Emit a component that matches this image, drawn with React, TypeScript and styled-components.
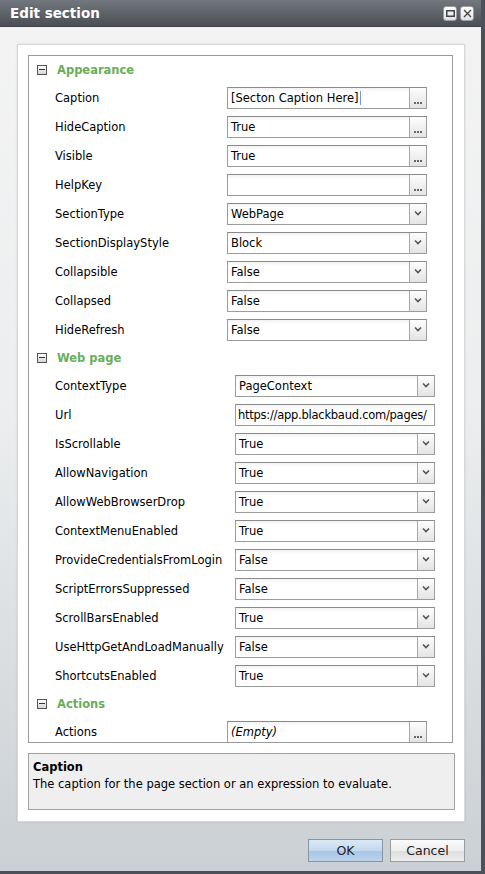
import React from 'react';
import styled, { createGlobalStyle } from 'styled-components';

type Kind = 'text' | 'ellipsis' | 'select';

interface Prop {
  name: string;
  value: string;
  kind: Kind;
  italic?: boolean;
  caret?: boolean;
}

interface Section {
  title: string;
  labelWidth: number;
  props: Prop[];
}

const sections: Section[] = [
  {
    title: 'Appearance',
    labelWidth: 172,
    props: [
      { name: 'Caption', value: '[Secton Caption Here]', kind: 'ellipsis', caret: true },
      { name: 'HideCaption', value: 'True', kind: 'ellipsis' },
      { name: 'Visible', value: 'True', kind: 'ellipsis' },
      { name: 'HelpKey', value: '', kind: 'ellipsis' },
      { name: 'SectionType', value: 'WebPage', kind: 'select' },
      { name: 'SectionDisplayStyle', value: 'Block', kind: 'select' },
      { name: 'Collapsible', value: 'False', kind: 'select' },
      { name: 'Collapsed', value: 'False', kind: 'select' },
      { name: 'HideRefresh', value: 'False', kind: 'select' },
    ],
  },
  {
    title: 'Web page',
    labelWidth: 180,
    props: [
      { name: 'ContextType', value: 'PageContext', kind: 'select' },
      { name: 'Url', value: 'https://app.blackbaud.com/pages/', kind: 'text' },
      { name: 'IsScrollable', value: 'True', kind: 'select' },
      { name: 'AllowNavigation', value: 'True', kind: 'select' },
      { name: 'AllowWebBrowserDrop', value: 'True', kind: 'select' },
      { name: 'ContextMenuEnabled', value: 'True', kind: 'select' },
      { name: 'ProvideCredentialsFromLogin', value: 'False', kind: 'select' },
      { name: 'ScriptErrorsSuppressed', value: 'False', kind: 'select' },
      { name: 'ScrollBarsEnabled', value: 'True', kind: 'select' },
      { name: 'UseHttpGetAndLoadManually', value: 'False', kind: 'select' },
      { name: 'ShortcutsEnabled', value: 'True', kind: 'select' },
    ],
  },
  {
    title: 'Actions',
    labelWidth: 172,
    props: [{ name: 'Actions', value: '(Empty)', kind: 'ellipsis', italic: true }],
  },
];

const GlobalStyle = createGlobalStyle`
  html, body {
    margin: 0;
    padding: 0;
    background: #ffffff;
  }
  body {
    font-family: "DejaVu Sans", "Open Sans", sans-serif;
    font-size: 11.5px;
    color: #000;
  }
`;

const Window = styled.div`
  width: 485px;
  height: 874px;
  box-sizing: border-box;
  display: flex;
  flex-direction: column;
  border-right: 4px solid #4d5157;
  border-bottom: 3px solid #4d5157;
`;

const TitleBar = styled.div`
  height: 27px;
  flex: none;
  display: flex;
  align-items: center;
  justify-content: space-between;
  padding: 0 7px 0 10px;
  background: linear-gradient(#73777e, #4a4e55);
  border-bottom: 1px solid #3f4248;
  box-sizing: border-box;
`;

const Title = styled.div`
  color: #fff;
  font-weight: bold;
  font-size: 13.5px;
`;

const TitleButtons = styled.div`
  display: flex;
  gap: 3px;
`;

const TitleButton = styled.div`
  width: 14px;
  height: 15px;
  border-radius: 3px;
  background: linear-gradient(#ffffff, #dfe1e4);
  border: 1px solid #9a9ea4;
  box-sizing: border-box;
  display: flex;
  align-items: center;
  justify-content: center;
`;

const Body = styled.div`
  flex: 1;
  display: flex;
  flex-direction: column;
  padding: 17px 16px 0 17px;
  background: linear-gradient(#f3f3f3 0%, #eceeef 45%, #cbd0d4 100%);
`;

const Panel = styled.div`
  background: #fff;
  border: 1px solid #d8d8d8;
  box-shadow: 0 0 2px rgba(0, 0, 0, 0.12);
  padding: 10px 9px 11px 10px;
  display: flex;
  flex-direction: column;
`;

const Grid = styled.div`
  height: 688px;
  overflow: hidden;
  border: 1px solid #9a9a9a;
  box-sizing: border-box;
  margin-right: 2px;
  display: flex;
  flex-direction: column;
`;

const Header = styled.div`
  height: 27px;
  flex: none;
  display: flex;
  align-items: center;
  padding: 1px 0 1px 8px;
  box-sizing: border-box;
  gap: 10px;
`;

const Expander = styled.div`
  width: 8px;
  height: 8px;
  border: 1px solid #555;
  background: linear-gradient(#ffffff, #d6d6d6);
  position: relative;
  &::after {
    content: '';
    position: absolute;
    left: 1px;
    right: 1px;
    top: 3px;
    height: 1px;
    background: #333;
  }
`;

const HeaderText = styled.div`
  color: #6aad5a;
  font-weight: bold;
  font-size: 11.5px;
`;

const Row = styled.div<{ $labelWidth: number }>`
  height: 29px;
  flex: none;
  display: grid;
  grid-template-columns: ${p => p.$labelWidth}px 200px;
  align-items: center;
  padding-left: 26px;
`;

const Label = styled.div`
  white-space: nowrap;
`;

const Field = styled.div`
  height: 22px;
  box-sizing: border-box;
  border: 1px solid #9c9c9c;
  border-top-color: #8a8a8a;
  background: linear-gradient(#f2f2f2 0px, #ffffff 4px);
  display: flex;
  align-items: stretch;
`;

const Value = styled.div<{ $italic?: boolean; $tight?: boolean }>`
  flex: 1;
  display: flex;
  align-items: center;
  padding-left: ${p => (p.$tight ? 2 : 3)}px;
  white-space: nowrap;
  overflow: hidden;
  letter-spacing: ${p => (p.$tight ? '-0.25px' : 'normal')};
  font-style: ${p => (p.$italic ? 'italic' : 'normal')};
`;

const Caret = styled.span`
  display: inline-block;
  width: 1px;
  height: 14px;
  margin-left: 1px;
  background: #6f9be0;
`;

const SideButton = styled.div`
  width: 16px;
  flex: none;
  border-left: 1px solid #a9a9a9;
  background: linear-gradient(#fdfdfd, #e4e4e4);
  display: flex;
  justify-content: center;
`;

const Dots = styled.div`
  align-self: flex-end;
  margin-bottom: 4px;
  display: flex;
  gap: 1px;
  span {
    width: 2px;
    height: 2px;
    background: #666;
  }
`;

const Description = styled.div`
  margin-top: 10px;
  height: 57px;
  box-sizing: border-box;
  border: 1px solid #a2a2a2;
  background: #efefef;
  padding: 6px 4px;
  display: flex;
  flex-direction: column;
  gap: 3px;
`;

const DescTitle = styled.div`
  font-weight: bold;
`;

const Footer = styled.div`
  display: flex;
  justify-content: flex-end;
  gap: 7px;
  padding: 17px 0 0 0;
`;

const Button = styled.button<{ $primary?: boolean }>`
  width: 75px;
  height: 23px;
  font-family: "DejaVu Sans", "Open Sans", sans-serif;
  font-size: 12.5px;
  color: #222;
  border: 1px solid ${p => (p.$primary ? '#8596a8' : '#9c9c9c')};
  background: ${p =>
    p.$primary
      ? 'linear-gradient(#dbe8f5 0%, #c3d8ee 50%, #a9c6e6 55%, #bcd3ec 100%)'
      : 'linear-gradient(#fbfbfb 0%, #eeeeee 50%, #dedede 55%, #ececec 100%)'};
  padding: 0;
`;

const Chevron = () => (
  <svg width="8" height="6" viewBox="0 0 8 6" style={{ marginTop: 6 }}>
    <path d="M1 1.5 L4 4.5 L7 1.5" fill="none" stroke="#555" strokeWidth="1.6" />
  </svg>
);

const PropRow: React.FC<{ prop: Prop; labelWidth: number }> = ({ prop, labelWidth }) => (
  <Row $labelWidth={labelWidth}>
    <Label>{prop.name}</Label>
    <Field>
      <Value $italic={prop.italic} $tight={prop.kind === 'text'}>
        {prop.value}
        {prop.caret && <Caret />}
      </Value>
      {prop.kind === 'ellipsis' && (
        <SideButton>
          <Dots>
            <span />
            <span />
            <span />
          </Dots>
        </SideButton>
      )}
      {prop.kind === 'select' && (
        <SideButton>
          <Chevron />
        </SideButton>
      )}
    </Field>
  </Row>
);

export default function App() {
  return (
    <>
      <GlobalStyle />
      <Window>
        <TitleBar>
          <Title>Edit section</Title>
          <TitleButtons>
            <TitleButton>
              <svg width="9" height="7" viewBox="0 0 9 7">
                <rect x="0.75" y="0.75" width="7.5" height="5.5" fill="none" stroke="#444" strokeWidth="1.5" />
              </svg>
            </TitleButton>
            <TitleButton>
              <svg width="9" height="9" viewBox="0 0 9 9">
                <path d="M1 1 L8 8 M8 1 L1 8" stroke="#444" strokeWidth="1.3" />
              </svg>
            </TitleButton>
          </TitleButtons>
        </TitleBar>
        <Body>
          <Panel>
            <Grid>
              {sections.map(s => (
                <React.Fragment key={s.title}>
                  <Header>
                    <Expander />
                    <HeaderText>{s.title}</HeaderText>
                  </Header>
                  {s.props.map(p => (
                    <PropRow key={p.name} prop={p} labelWidth={s.labelWidth} />
                  ))}
                </React.Fragment>
              ))}
            </Grid>
            <Description>
              <DescTitle>Caption</DescTitle>
              <div>The caption for the page section or an expression to evaluate.</div>
            </Description>
          </Panel>
          <Footer>
            <Button $primary>OK</Button>
            <Button>Cancel</Button>
          </Footer>
        </Body>
      </Window>
    </>
  );
}
